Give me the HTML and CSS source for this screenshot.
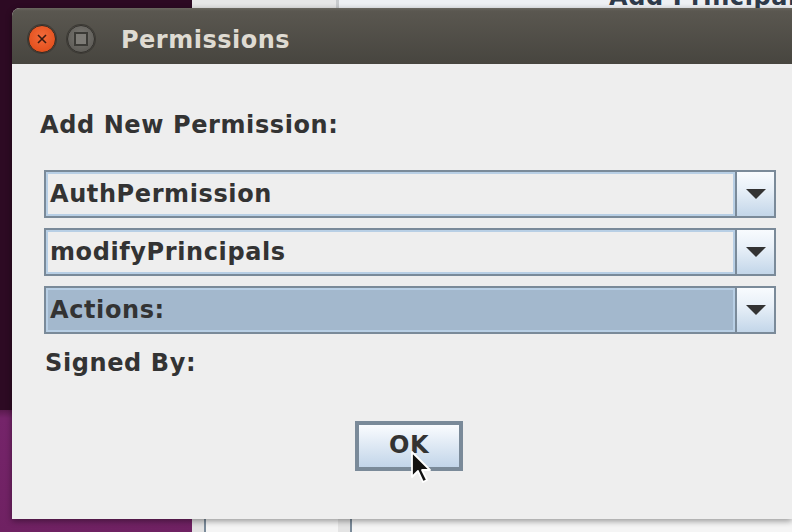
FILE: index.html
```html
<!DOCTYPE html>
<html>
<head>
<meta charset="utf-8">
<link rel="stylesheet" href="styles.css">
</head>
<body>
<div class="desktop">
  <div class="wall-dark"></div>
  <div class="wall-purple"></div>
  <div class="bg-top">
    <div class="bg-top-left"></div>
    <div class="bg-top-right"><span class="bg-title">Add Principal</span></div>
  </div>
  <div class="bg-bottom">
    <div class="bb-a"></div>
    <div class="bb-line"></div>
    <div class="bb-b"></div>
    <div class="bb-line"></div>
    <div class="bb-c"></div>
  </div>

  <div class="dialog">
    <div class="titlebar">
      <div class="wbtn close">
        <svg width="12" height="12" viewBox="0 0 12 12"><path d="M2 2 L10 10 M10 2 L2 10" stroke="#3a1a10" stroke-width="1.6"/></svg>
      </div>
      <div class="wbtn max"><span class="max-sq"></span></div>
      <span class="title">Permissions</span>
    </div>
    <div class="content">
      <div class="heading">Add New Permission:</div>
      <div class="combos">
        <div class="combo">
          <div class="field">AuthPermission</div>
          <div class="arrow"><span class="tri"></span></div>
        </div>
        <div class="combo">
          <div class="field">modifyPrincipals</div>
          <div class="arrow"><span class="tri"></span></div>
        </div>
        <div class="combo selected">
          <div class="field">Actions:</div>
          <div class="arrow"><span class="tri"></span></div>
        </div>
      </div>
      <div class="signed">Signed By:</div>
      <div class="actions">
        <button class="ok">OK</button>
      </div>
    </div>
  </div>

  <svg class="cursor" width="26" height="36" viewBox="0 0 26 36">
    <path d="M2 2 L2 27 L8 21 L13 32 L17 30 L12 20 L20 20 Z" fill="#111" stroke="#fff" stroke-width="1.8" stroke-linejoin="round"/>
  </svg>
</div>
</body>
</html>
```

FILE: styles.css
```css
html, body {
  margin: 0;
  padding: 0;
}
body {
  width: 792px;
  height: 532px;
  overflow: hidden;
  font-family: "DejaVu Sans", "Liberation Sans", sans-serif;
}
.desktop {
  position: relative;
  width: 792px;
  height: 532px;
  overflow: hidden;
  background: #2d0a23;
}
.wall-dark {
  position: absolute;
  left: 0; top: 0;
  width: 192px; height: 410px;
  background: #2d0a23;
}
.wall-purple {
  position: absolute;
  left: 0; top: 410px;
  width: 192px; height: 122px;
  background: linear-gradient(180deg, #5a1a4e 0, #75246a 8px, #6f2162 100%);
}
.bg-top {
  position: absolute;
  left: 192px; top: 0;
  width: 600px; height: 10px;
  display: flex;
}
.bg-top-left {
  width: 144px;
  background: #e7e7e7;
  border-right: 3px solid #c9cbcd;
}
.bg-top-right {
  flex: 1;
  background: #eef0f3;
  position: relative;
  overflow: hidden;
}
.bg-title {
  position: absolute;
  left: 270px;
  top: -17px;
  font-size: 24px;
  font-weight: bold;
  color: #2e3a4a;
  white-space: nowrap;
  letter-spacing: 0.6px;
}
.bg-bottom {
  position: absolute;
  left: 192px; top: 519px;
  width: 600px; height: 13px;
  display: flex;
  box-shadow: inset 0 4px 3px -1px #a8a8a8;
}
.bb-a { width: 12px; background: #e2e2e2; }
.bb-line { width: 2px; background: #7a8a99; }
.bb-b { width: 132px; background: #f5f5f5; border-right: 12px solid #e4e4e4; }
.bb-c { flex: 1; background: #f5f5f5; }

.dialog {
  position: absolute;
  left: 12px; top: 8px;
  width: 780px; height: 511px;
  background: #eeeeee;
  border-top-left-radius: 8px;
  overflow: hidden;
  box-shadow: 0 2px 6px rgba(0,0,0,0.4);
  display: flex;
  flex-direction: column;
}
.titlebar {
  height: 56px;
  box-sizing: border-box;
  padding-top: 6px;
  flex: none;
  background: linear-gradient(180deg, #6a675f 0, #5a5750 3px, #47453f 100%);
  display: flex;
  align-items: center;
  padding-left: 16px;
}
.wbtn {
  width: 28px; height: 28px;
  border-radius: 50%;
  display: flex;
  align-items: center;
  justify-content: center;
  box-sizing: border-box;
}
.close {
  background: radial-gradient(circle at 50% 40%, #f26a3a 0, #e4521f 70%);
  border: 1px solid #3a2a20;
  box-shadow: 0 0 0 1px #3c3a35;
}
.max {
  margin-left: 11px;
  background: radial-gradient(circle at 50% 40%, #7a7873 0, #5f5d58 75%);
  border: 1px solid #33312d;
  box-shadow: 0 0 0 1px #3c3a35;
}
.max-sq {
  width: 10px; height: 10px;
  border: 2px solid #3b3a36;
  background: #7d7b76;
}
.title {
  margin-left: 26px;
  font-family: "DejaVu Sans", sans-serif;
  font-weight: bold;
  font-size: 24px;
  color: #dfdbd2;
  letter-spacing: 0.5px;
  margin-top: 2px;
}
.content {
  padding: 44px 16px 0 28px;
  color: #333333;
  font-weight: bold;
  font-size: 24px;
}
.heading {
  line-height: 34px;
  letter-spacing: 0.6px;
}
.combos {
  margin-top: 28px;
  margin-left: 4px;
  display: flex;
  flex-direction: column;
  gap: 10px;
}
.combo {
  height: 48px;
  box-sizing: border-box;
  border: 2px solid #7a8a99;
  display: flex;
}
.field {
  flex: 1;
  border: 2px solid #b8cfe5;
  background: #eeeeee;
  display: flex;
  align-items: center;
  padding-left: 2px;
  letter-spacing: 0.6px;
  border-right: 2px solid #b8cfe5;
  line-height: 1;
}
.selected .field {
  background: #a3b8cd;
}
.arrow {
  width: 37px;
  border-left: 2px solid #7a8a99;
  background: linear-gradient(180deg, #f8fbfe 0, #e8f0f8 40%, #c3d6e9 100%);
  display: flex;
  align-items: center;
  justify-content: center;
}
.tri {
  width: 0; height: 0;
  border-left: 10px solid transparent;
  border-right: 10px solid transparent;
  border-top: 10px solid #333333;
  margin-left: 1px;
}
.signed {
  margin-top: 14px;
  margin-left: 5px;
  line-height: 30px;
  letter-spacing: 0.6px;
}
.actions {
  display: flex;
  justify-content: center;
  margin-top: 43px;
}
.ok {
  width: 108px;
  height: 50px;
  margin-left: 2px;
  border: 4px solid #7a8a99;
  background: linear-gradient(180deg, #fafcfe 0, #e6eef7 35%, #c2d5e9 100%);
  font-family: "DejaVu Sans", sans-serif;
  font-size: 24px;
  font-weight: bold;
  letter-spacing: 0.6px;
  color: #333;
  padding: 0 0 2px 0;
  display: flex;
  align-items: center;
  justify-content: center;
}
.cursor {
  position: absolute;
  left: 410px;
  top: 450px;
}
```
